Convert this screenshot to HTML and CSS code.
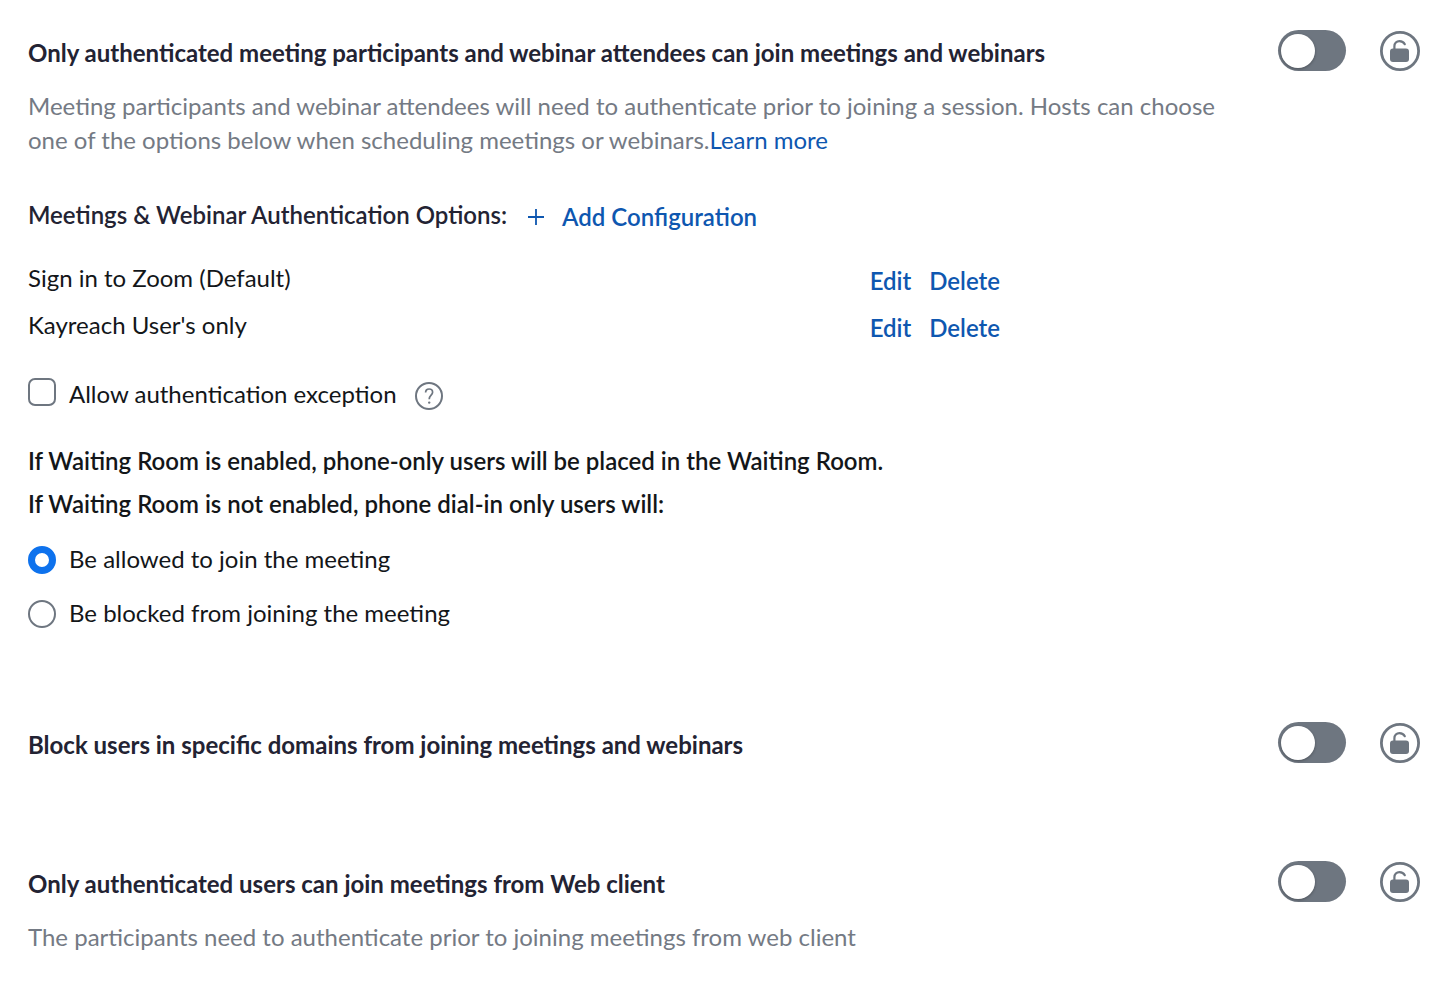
FILE: index.html
```html
<!DOCTYPE html>
<html lang="en">
<head>
  <meta charset="UTF-8" />
  <meta name="viewport" content="width=device-width, initial-scale=1.0"/>
  <title>Security Settings</title>
  <link rel="stylesheet" href="styles.css">
</head>
<body>

<svg class="sprite" aria-hidden="true">
  <symbol id="unlock" viewBox="0 0 40 40">
    <circle cx="20" cy="20" r="18.6" fill="none" stroke="currentColor" stroke-width="2.8"/>
    <path d="M14.4 19V15.2A5 5 0 0 1 19.4 10.1C21.8 10.1 23.8 11.3 24.8 13.2" fill="none" stroke="currentColor" stroke-width="2.2" stroke-linecap="round"/>
    <rect x="10" y="17.6" width="19" height="13.4" rx="3" fill="currentColor"/>
  </symbol>
</svg>

<main>
  <section class="setting">
    <div class="setting-head">
      <h2><label for="auth-join">Only authenticated meeting participants and webinar attendees can join meetings and webinars</label></h2>
      <div class="controls">
        <input type="checkbox" class="toggle" id="auth-join" role="switch">
        <button class="lock" aria-label="Lock setting"><svg><use href="#unlock"/></svg></button>
      </div>
    </div>
    <p class="description">Meeting participants and webinar attendees will need to authenticate prior to joining a session. Hosts can choose one of the options below when scheduling meetings or webinars.<a href="#">Learn more</a></p>

    <div class="options-head">
      <h3>Meetings &amp; Webinar Authentication Options:</h3>
      <button class="link add">
        <svg viewBox="0 0 16 16" aria-hidden="true"><path d="M8 0V16M0 8H16" fill="none" stroke="currentColor" stroke-width="1.8"/></svg>
        Add Configuration
      </button>
    </div>
    <ul class="options">
      <li><span>Sign in to Zoom (Default)</span><button class="link">Edit</button><button class="link">Delete</button></li>
      <li><span>Kayreach User's only</span><button class="link">Edit</button><button class="link">Delete</button></li>
    </ul>

    <div class="choice exception">
      <input type="checkbox" id="exception">
      <label for="exception">Allow authentication exception</label>
      <button class="help" aria-label="Help">
        <svg viewBox="0 0 28 28"><circle cx="14" cy="14" r="13" fill="none" stroke="currentColor" stroke-width="2"/><path d="M10.6 10.6C10.6 8.4 12 7 14.1 7C16.2 7 17.6 8.4 17.6 10.3C17.6 13 14.2 13.4 14.2 17.2" fill="none" stroke="currentColor" stroke-width="1.7"/><circle cx="14.2" cy="20.6" r="1.2" fill="currentColor"/></svg>
      </button>
    </div>

    <div class="waiting" role="radiogroup" aria-labelledby="waiting-label">
      <p>If Waiting Room is enabled, phone-only users will be placed in the Waiting Room.</p>
      <p id="waiting-label">If Waiting Room is not enabled, phone dial-in only users will:</p>
      <div class="choice">
        <input type="radio" name="phone" id="allowed" checked>
        <label for="allowed">Be allowed to join the meeting</label>
      </div>
      <div class="choice">
        <input type="radio" name="phone" id="blocked">
        <label for="blocked">Be blocked from joining the meeting</label>
      </div>
    </div>
  </section>

  <section class="setting">
    <div class="setting-head">
      <h2><label for="block-domains">Block users in specific domains from joining meetings and webinars</label></h2>
      <div class="controls">
        <input type="checkbox" class="toggle" id="block-domains" role="switch">
        <button class="lock" aria-label="Lock setting"><svg><use href="#unlock"/></svg></button>
      </div>
    </div>
  </section>

  <section class="setting">
    <div class="setting-head">
      <h2><label for="web-client">Only authenticated users can join meetings from Web client</label></h2>
      <div class="controls">
        <input type="checkbox" class="toggle" id="web-client" role="switch">
        <button class="lock" aria-label="Lock setting"><svg><use href="#unlock"/></svg></button>
      </div>
    </div>
    <p class="description">The participants need to authenticate prior to joining meetings from web client</p>
  </section>
</main>

</body>
</html>
```
FILE: styles.css
```css
* {
  box-sizing: border-box;
}
body {
  font-family: Lato, sans-serif;
  font-size: 24px;
  line-height: 34px;
  background: #fff;
  color: #131619;
  margin: 0;
}
main {
  display: flex;
  flex-direction: column;
  gap: 90px;
  padding: 30px 22px 40px 28px;
}
h2, h3, p, ul {
  margin: 0;
  padding: 0;
}
h2, h3 {
  font-size: 24px;
  color: #232333;
}
h2 {
  font-weight: 700;
  padding-top: 6px;
}
h3 {
  font-weight: 600;
}
button {
  font: inherit;
  color: inherit;
  background: none;
  border: 0;
  padding: 0;
  cursor: pointer;
}
a, .link {
  color: #0e57b0;
  text-decoration: none;
}
.link {
  font-weight: 600;
}
.sprite {
  display: none;
}
.setting-head {
  display: flex;
  justify-content: space-between;
  gap: 34px;
  padding-bottom: 8px;
}
.controls {
  display: flex;
  align-items: center;
  gap: 34px;
  height: 41px;
}
.toggle {
  appearance: none;
  width: 68px;
  height: 41px;
  margin: 0;
  padding: 4px 3px;
  border-radius: 21px;
  background: #6e7680;
}
.toggle::before {
  content: "";
  display: block;
  width: 34px;
  height: 34px;
  border-radius: 50%;
  background: #fff;
  box-shadow: 0 1px 3px rgba(0,0,0,0.3);
}
.toggle:checked {
  background: #0e72ed;
}
.toggle:checked::before {
  margin-left: auto;
}
.lock, .lock svg {
  display: block;
  width: 40px;
  height: 40px;
  color: #6e7680;
}
.description {
  max-width: 1210px;
  margin-top: 10px;
  color: #747a84;
}
.options-head {
  display: flex;
  gap: 21px;
  margin-top: 41px;
}
.add {
  display: flex;
  align-items: center;
  gap: 18px;
  padding-top: 2px;
}
.add svg {
  width: 16px;
  height: 16px;
}
.options {
  list-style: none;
  max-width: 972px;
  margin-top: 25px;
}
.options li {
  display: flex;
  align-items: flex-start;
  gap: 18px;
  height: 47px;
}
.options span {
  flex: 1;
  padding-top: 2px;
}
.options .link {
  padding-top: 5px;
}
.choice {
  display: flex;
  align-items: center;
  gap: 13px;
}
.choice input {
  appearance: none;
  width: 28px;
  height: 28px;
  margin: 0;
  border: 2px solid #6e7680;
  background: #fff;
}
.choice input[type="checkbox"] {
  border-radius: 7px;
}
.choice input[type="checkbox"]:checked {
  border-color: #0e72ed;
  background: #0e72ed;
}
.choice input[type="radio"] {
  border-radius: 50%;
}
.choice input[type="radio"]:checked {
  border: 7px solid #0e72ed;
}
.exception {
  align-items: flex-start;
  margin-top: 24px;
}
.exception input {
  margin-top: 1px;
}
.help, .help svg {
  display: block;
  width: 28px;
  height: 28px;
  color: #6e7680;
}
.help {
  margin: 5px 0 0 5px;
}
.waiting {
  margin-top: 33px;
}
.waiting p {
  font-weight: 600;
  margin-bottom: 9px;
}
.waiting .choice {
  margin-top: 18px;
}
.waiting p + .choice {
  margin-top: 21px;
}
.waiting label {
  padding-bottom: 2px;
}
```
